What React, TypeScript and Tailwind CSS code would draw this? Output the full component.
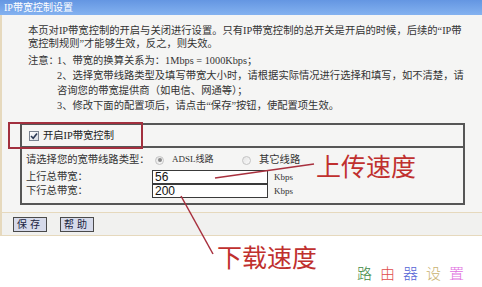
/**
 * IP bandwidth control settings page (router admin), with annotations
 */

const cn = "font-['Liberation_Serif','Noto_Sans_CJK_SC',serif]"

function Checkbox() {
  return (
    <span className="flex h-[10px] w-[10px] items-center justify-center border border-[#7a8290] bg-gradient-to-br from-[#ffffff] to-[#d8dce4]">
      <svg width="8" height="8" viewBox="0 0 8 8">
        <path d="M1 4 L3.2 6.2 L7 1.5" fill="none" stroke="#2c3a55" strokeWidth="1.6" />
      </svg>
    </span>
  )
}

function Radio({ checked }: { checked?: boolean }) {
  return (
    <span className="flex h-[9px] w-[9px] items-center justify-center rounded-full border border-[#c4c4c4] bg-gradient-to-br from-[#e4e4e4] to-[#fafafa]">
      {checked && <span className="h-[4px] w-[4px] rounded-full bg-[#8a8a8a]" />}
    </span>
  )
}

function FieldRow({ label, value }: { label: string; value: string }) {
  return (
    <div className="flex h-[14px] items-center">
      <span className="w-[126px] text-[10.3px] leading-[14px] text-[#333]">{label}</span>
      <span className="flex h-[14px] w-[116px] items-center border border-[#3a3a3a] bg-white pl-[2px] font-['Liberation_Sans',sans-serif] text-[12px] leading-none text-[#111]">
        {value}
      </span>
      <span className="ml-[6px] font-['Liberation_Serif',serif] text-[9px] leading-none text-[#333]">Kbps</span>
    </div>
  )
}

export default function App() {
  return (
    <div className={`relative h-[287px] w-[482px] overflow-hidden bg-white ${cn}`}>
      {/* Title bar */}
      <div className="h-[15px] bg-gradient-to-b from-[#6496e2] to-[#84b2f0] pl-[4px] text-[10px] leading-[15px] text-white">
        IP带宽控制设置
      </div>

      <div className="border-l-2 border-[#e6d9bd]">
        <div className="bg-[#f5f5f4] pb-[7px]">
          {/* Description */}
          <div className="pl-[26px] pt-[9px] text-[10.3px] text-[#333]">
            <p className="whitespace-nowrap leading-[13px]">
              本页对IP带宽控制的开启与关闭进行设置。只有IP带宽控制的总开关是开启的时候，后续的“IP带
            </p>
            <p className="whitespace-nowrap leading-[13px]">宽控制规则”才能够生效，反之，则失效。</p>
            <div className="mt-[3px] flex leading-[15px]">
              <span className="w-[29px] shrink-0 whitespace-nowrap">注意：</span>
              <div className="whitespace-nowrap">
                <p>1、带宽的换算关系为：1Mbps = 1000Kbps；</p>
                <p>2、选择宽带线路类型及填写带宽大小时，请根据实际情况进行选择和填写，如不清楚，请</p>
                <p>咨询您的带宽提供商（如电信、网通等）；</p>
                <p>3、修改下面的配置项后，请点击“保存”按钮，使配置项生效。</p>
              </div>
            </div>
          </div>

          {/* Settings box */}
          <div className="ml-[18px] mt-[10px] w-[445px] border-2 border-[#565656]">
            <div className="flex h-[23px] items-center gap-[4px] border-b-2 border-[#565656] pl-[7px] text-[10.3px] text-[#222]">
              <Checkbox />
              <span>开启IP带宽控制</span>
            </div>
            <div className="px-[4px] pb-[5px] pt-[5px]">
              <div className="flex h-[14px] items-center text-[10.3px] text-[#333]">
                <span className="w-[129px] whitespace-nowrap">请选择您的宽带线路类型：</span>
                <span className="flex w-[87px] items-center">
                  <Radio checked />
                  <span className="ml-[8px] text-[9px]">ADSL线路</span>
                </span>
                <span className="flex items-center">
                  <Radio />
                  <span className="ml-[8px]">其它线路</span>
                </span>
              </div>
              <div className="mt-[3px]">
                <FieldRow label="上行总带宽：" value="56" />
                <FieldRow label="下行总带宽：" value="200" />
              </div>
            </div>
          </div>
        </div>

        {/* Buttons */}
        <div className="flex h-[24px] items-start gap-[13px] border-y border-[#e6d9bd] bg-[#f1f1ef] pl-[11px] pt-[4px]">
          <button className="h-[15px] w-[34px] border border-[#4a4a4a] bg-[#d6daea] text-[10px] leading-none tracking-[3px] text-[#1a2340]">
            保存
          </button>
          <button className="h-[15px] w-[34px] border border-[#4a4a4a] bg-[#d6daea] text-[10px] leading-none tracking-[3px] text-[#1a2340]">
            帮助
          </button>
        </div>
      </div>

      {/* Bottom annotation strip */}
      <div className="flex items-start pl-[217px] font-['Noto_Sans_CJK_SC',sans-serif]">
        <span className="mt-[8px] text-[25px] leading-none text-[#c0302e]">下载速度</span>
        <span className="ml-[40px] mt-[29px] flex gap-[8px] text-[15px] font-light leading-none">
          <span className="text-[#3f8a46]">路</span>
          <span className="text-[#e04a4a]">由</span>
          <span className="text-[#5666d6]">器</span>
          <span className="text-[#c9b271]">设</span>
          <span className="text-[#e06fe0]">置</span>
        </span>
      </div>

      {/* Overlay annotations */}
      <div className="absolute left-[8px] top-[122px] h-[27px] w-[135px] border-2 border-[#a2303e]" />
      <span className="absolute left-[316px] top-[153px] font-['Noto_Sans_CJK_SC',sans-serif] text-[25px] leading-none text-[#c0302e]">
        上传速度
      </span>
      <svg className="absolute left-0 top-0" width="482" height="287">
        <line x1="215" y1="178" x2="314" y2="164" stroke="#a8303e" strokeWidth="1.5" />
        <line x1="181" y1="196" x2="213" y2="254" stroke="#a8303e" strokeWidth="1.5" />
      </svg>
    </div>
  )
}
